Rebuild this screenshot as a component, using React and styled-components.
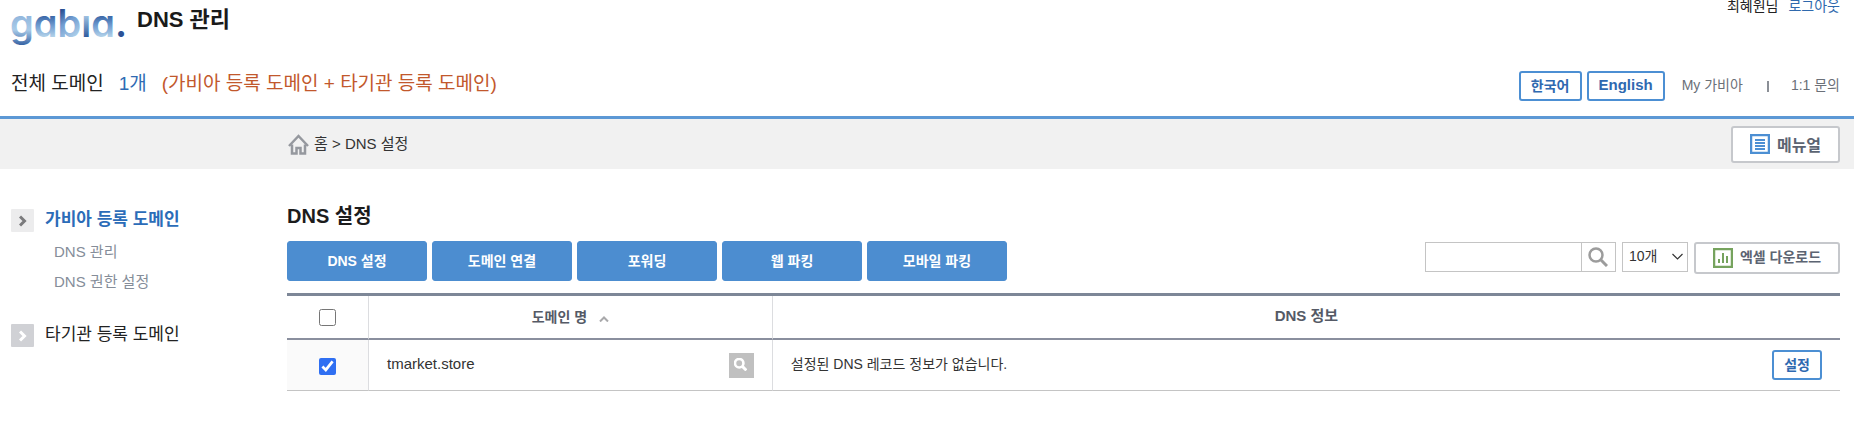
import React, { useState } from 'react';
import styled, { createGlobalStyle } from 'styled-components';

const GlobalStyle = createGlobalStyle`
* {
  box-sizing: border-box;
}
body {
  margin: 0;
  background: #fff;
  color: #222;
  font-family: "Liberation Sans", "Noto Sans CJK KR", sans-serif;
  font-size: 14px;
  line-height: 20px;
}
button, input, select {
  font-family: inherit;
  font-size: 14px;
  margin: 0;
}
button {
  cursor: pointer;
}
a {
  text-decoration: none;
}
h1, h2, ul {
  margin: 0;
  padding: 0;
}
`;

const Header = styled.header`
border-bottom: 3px solid #5c98d5;
padding: 0 14px 0 11px;
`;
const TopRow = styled.div`
display: flex;
justify-content: space-between;
align-items: flex-start;
height: 56px;
`;
const Brand = styled.div`
display: flex;
gap: 8px;
`;
const Logo = styled.svg`
display: block;
width: 118px;
height: 50px;

text {
  font-family: "Inter", "Liberation Sans", sans-serif;
  font-weight: 600;
  font-size: 38px;
  font-feature-settings: "cv11";
}
`;
const Title = styled.h1`
font-size: 22px;
line-height: 40px;
font-weight: bold;
color: #1a1a1a;
`;
const User = styled.div`
display: flex;
gap: 10px;
line-height: 12px;
`;
const LogoutLink = styled.a`
color: #2f69ad;
`;
const InfoRow = styled.div`
display: flex;
justify-content: space-between;
align-items: center;
height: 60px;
`;
const Total = styled.div`
display: flex;
gap: 15px;
font-size: 19px;
line-height: 24px;
padding-bottom: 4px;
color: #222;
`;
const Count = styled.span`
color: #2f6bb3;
`;
const Detail = styled.span`
color: #c2582c;
`;
const Utility = styled.div`
display: flex;
align-items: center;
`;
const OutlineButton = styled.button`
height: 30px;
padding: 0 ${(props) => props.$pad}px 3px;
margin-right: ${(props) => props.$gap || 0}px;
border: 2px solid #4c8fd3;
border-radius: 3px;
background: #fff;
color: #2f69b0;
font-weight: bold;
font-size: ${(props) => props.$size || 14}px;
`;
const UtilLink = styled.a`
padding-bottom: 2px;
color: #6b7078;
`;
const Bar = styled.span`
width: 2px;
height: 11px;
margin: 0 22px 0 24px;
background: #8b8f96;
`;

const CrumbBar = styled.nav`
display: flex;
justify-content: space-between;
align-items: center;
height: 50px;
padding: 0 14px 0 288px;
background: #f1f1f1;
`;
const Crumb = styled.div`
display: flex;
align-items: center;
gap: 5px;
font-size: 15px;
color: #333;

svg {
  display: block;
}
`;
const GrayButton = styled.button`
display: flex;
align-items: center;
justify-content: center;
gap: 7px;
width: ${(props) => props.$width}px;
height: ${(props) => props.$height}px;
padding: 0;
border: 2px solid #c6c8cc;
border-radius: 3px;
background: #fff;
color: #5c6472;
font-weight: bold;
font-size: ${(props) => props.$size}px;

svg {
  display: block;
}
`;
const ButtonText = styled.span`
padding-bottom: 4px;
`;

const Page = styled.div`
display: flex;
`;
const Side = styled.aside`
flex: 0 0 287px;
padding: 40px 11px 0;
`;
const Group = styled.div`
margin-bottom: 27px;
`;
const GroupTitle = styled.a`
display: flex;
align-items: center;
gap: 11px;
height: 23px;
font-size: 17px;
font-weight: ${(props) => (props.$active ? 'bold' : 'normal')};
color: ${(props) => (props.$active ? '#2b6cb8' : '#222')};

span:last-child {
  padding-bottom: 2px;
}
`;
const Arrow = styled.span`
display: flex;
align-items: center;
justify-content: center;
width: 23px;
height: 23px;
border-radius: 1px;
background: ${(props) => (props.$active ? '#ececed' : '#d0d1d5')};
color: ${(props) => (props.$active ? '#7b7b7d' : '#fff')};
`;
const SubMenu = styled.ul`
list-style: none;
padding: 5px 0 0 43px;
`;
const SubItem = styled.li`
line-height: 30px;

a {
  font-size: 15px;
  color: #858d99;
}
`;

const Main = styled.main`
flex: 1;
min-width: 0;
padding: 34px 14px 30px 0;
`;
const Heading = styled.h2`
font-size: 20px;
line-height: 26px;
font-weight: bold;
color: #1c1c1c;
`;
const Toolbar = styled.div`
display: flex;
justify-content: space-between;
margin: 12px 0;
`;
const Tabs = styled.div`
display: flex;
gap: 5px;
`;
const Tab = styled.button`
width: 140px;
height: 40px;
padding: 0 0 3px;
border: 1px solid #4c8dd0;
border-radius: 3px;
background: #4c8dd0;
color: #fff;
font-weight: bold;
`;
const Tools = styled.div`
display: flex;
align-items: flex-start;
gap: 6px;
padding-top: 1px;
`;
const SearchBox = styled.form`
display: flex;
border: 1px solid #c4c4c4;
`;
const SearchInput = styled.input`
width: 155px;
height: 28px;
padding: 0 8px;
border: none;
outline: none;
background: #fff;
`;
const SearchButton = styled.button`
display: flex;
align-items: center;
justify-content: center;
width: 34px;
height: 28px;
padding: 0 2px 0 0;
border: none;
border-left: 1px solid #c4c4c4;
background: #fff;
`;
const SelectWrap = styled.div`
position: relative;

svg {
  position: absolute;
  right: 5px;
  top: 11px;
  pointer-events: none;
}
`;
const Select = styled.select`
appearance: none;
width: 66px;
height: 30px;
padding: 0 6px 2px;
border: 1px solid #c4c4c4;
border-radius: 0;
background: #fff;
color: #333;
`;

const Table = styled.table`
width: 100%;
table-layout: fixed;
border-collapse: separate;
border-spacing: 0;
border-top: 3px solid #7d8797;
`;
const Th = styled.th`
width: ${(props) => props.$width || 'auto'};
height: 44px;
padding: 0 0 2px;
border-bottom: 2px solid #8a8f9e;
border-right: ${(props) => (props.$last ? 'none' : '1px solid #dcdde0')};
color: #555a66;
font-weight: bold;
font-size: ${(props) => props.$size || 14}px;
`;
const Td = styled.td`
height: 51px;
padding: 0 18px;
border-bottom: 1px solid #c4c4c4;
border-right: ${(props) => (props.$last ? 'none' : '1px solid #dcdde0')};
`;
const CheckTd = styled(Td)`
padding: 0;
text-align: center;
background: #fafafa;
`;
const Checkbox = styled.input`
width: 17px;
height: 17px;
vertical-align: middle;
accent-color: #2f6ff2;
`;
const SortButton = styled.button`
padding: 0;
border: none;
background: none;
color: inherit;
font-weight: bold;

svg {
  margin-left: 12px;
}
`;
const Cell = styled.div`
display: flex;
justify-content: space-between;
align-items: center;
color: #333;
`;
const CellText = styled.span`
padding-bottom: 3px;
font-size: ${(props) => props.$size || 14}px;
`;
const MiniSearch = styled.button`
display: flex;
align-items: center;
justify-content: center;
width: 25px;
height: 25px;
padding: 0 2px 2px 0;
border: none;
background: #c0c0c0;
`;

const letters = [
  { char: 'g', fill: 'url(#lg)' },
  { char: 'a', fill: 'url(#la)' },
  { char: 'b', fill: 'url(#lb)' },
  { char: 'ı', fill: 'url(#li)' },
  { char: 'a', fill: 'url(#la)' },
  { char: '.', fill: '#2b5296' },
];

const GabiaLogo = () => (
  <Logo viewBox="0 0 118 50" role="img" aria-label="gabia">
    <defs>
      <linearGradient id="lg" gradientUnits="userSpaceOnUse" x1="0" y1="14" x2="0" y2="46">
        <stop offset="0" stopColor="#8fb4dc" />
        <stop offset="0.5" stopColor="#a9cbe8" />
        <stop offset="1" stopColor="#2f5c9f" />
      </linearGradient>
      <linearGradient id="la" gradientUnits="userSpaceOnUse" x1="0" y1="14" x2="0" y2="37">
        <stop offset="0" stopColor="#2f5c9f" />
        <stop offset="0.5" stopColor="#6f9bd0" />
        <stop offset="1" stopColor="#b4d3ea" />
      </linearGradient>
      <linearGradient id="lb" gradientUnits="userSpaceOnUse" x1="48" y1="8" x2="66" y2="34">
        <stop offset="0.1" stopColor="#284f93" />
        <stop offset="0.5" stopColor="#6f9bd0" />
        <stop offset="1" stopColor="#a9cbe8" />
      </linearGradient>
      <linearGradient id="li" gradientUnits="userSpaceOnUse" x1="0" y1="14" x2="0" y2="37">
        <stop offset="0" stopColor="#a9cbe8" />
        <stop offset="1" stopColor="#2f5c9f" />
      </linearGradient>
    </defs>
    <text x="-1" y="37">
      {letters.map((l, i) => (
        <tspan key={i} fill={l.fill}>{l.char}</tspan>
      ))}
    </text>
  </Logo>
);

const HomeIcon = () => (
  <svg width="21" height="21" viewBox="0 0 21 21" fill="none" stroke="#95989e" strokeWidth="2.5">
    <path d="M1 12 10.500 2 20 12" />
    <path d="M4 10.500V19.500H8.500V14H12.500V19.500H17V10.500" />
  </svg>
);

const ManualIcon = () => (
  <svg width="20" height="20" viewBox="0 0 20 20" fill="none" stroke="#4c8fd3" strokeWidth="2">
    <rect x="1" y="1" width="18" height="18" strokeWidth="2.5" />
    <path d="M5 6h10M5 9h10M5 12h10M5 15h10" />
  </svg>
);

const ExcelIcon = () => (
  <svg width="20" height="20" viewBox="0 0 20 20" fill="none" stroke="#76a35e" strokeWidth="2">
    <rect x="1" y="1" width="18" height="18" strokeWidth="2.5" />
    <path d="M6 15v-4M10 15V5M14 15V8" />
  </svg>
);

const SearchIcon = ({ size, color, width }) => (
  <svg width={size} height={size} viewBox="0 0 20 20" fill="none" stroke={color} strokeWidth={width}>
    <circle cx="8" cy="8" r="6.500" />
    <path d="M12.500 12.500 19 19" strokeWidth={width + 0.5} />
  </svg>
);

const ChevronRight = () => (
  <svg width="8" height="12" viewBox="0 0 8 12" fill="none" stroke="currentColor" strokeWidth="3">
    <path d="M1 1.500 5.500 6 1 10.500" />
  </svg>
);

const tabs = ['DNS 설정', '도메인 연결', '포워딩', '웹 파킹', '모바일 파킹'];

const App = () => {
  const [checked, setChecked] = useState(true);
  const [all, setAll] = useState(false);
  const [keyword, setKeyword] = useState('');

  return (
    <>
      <GlobalStyle />
      <Header>
        <TopRow>
          <Brand>
            <GabiaLogo />
            <Title>DNS 관리</Title>
          </Brand>
          <User>
            <span>최혜원님</span>
            <LogoutLink href="#logout">로그아웃</LogoutLink>
          </User>
        </TopRow>
        <InfoRow>
          <Total>
            <span>전체 도메인</span>
            <Count>1개</Count>
            <Detail>(가비아 등록 도메인 + 타기관 등록 도메인)</Detail>
          </Total>
          <Utility>
            <OutlineButton $pad={10} $gap={5}>한국어</OutlineButton>
            <OutlineButton $pad={10} $gap={17} $size={15}>English</OutlineButton>
            <UtilLink href="#my">My 가비아</UtilLink>
            <Bar />
            <UtilLink href="#qna">1:1 문의</UtilLink>
          </Utility>
        </InfoRow>
      </Header>
      <CrumbBar>
        <Crumb>
          <HomeIcon />
          <span>홈 &gt; DNS 설정</span>
        </Crumb>
        <GrayButton $width={109} $height={37} $size={16}>
          <ManualIcon />
          메뉴얼
        </GrayButton>
      </CrumbBar>
      <Page>
        <Side>
          <Group>
            <GroupTitle $active href="#gabia">
              <Arrow $active><ChevronRight /></Arrow>
              <span>가비아 등록 도메인</span>
            </GroupTitle>
            <SubMenu>
              <SubItem><a href="#dns">DNS 관리</a></SubItem>
              <SubItem><a href="#auth">DNS 권한 설정</a></SubItem>
            </SubMenu>
          </Group>
          <GroupTitle href="#other">
            <Arrow><ChevronRight /></Arrow>
            <span>타기관 등록 도메인</span>
          </GroupTitle>
        </Side>
        <Main>
          <Heading>DNS 설정</Heading>
          <Toolbar>
            <Tabs>
              {tabs.map((tab) => (
                <Tab key={tab}>{tab}</Tab>
              ))}
            </Tabs>
            <Tools>
              <SearchBox onSubmit={(e) => e.preventDefault()}>
                <SearchInput
                  aria-label="검색어"
                  value={keyword}
                  onChange={(e) => setKeyword(e.target.value)}
                />
                <SearchButton aria-label="검색">
                  <SearchIcon size={20} color="#9c9c9c" width={2.5} />
                </SearchButton>
              </SearchBox>
              <SelectWrap>
                <Select aria-label="목록 개수" defaultValue="10">
                  <option value="10">10개</option>
                  <option value="20">20개</option>
                  <option value="50">50개</option>
                </Select>
                <svg width="11" height="8" viewBox="0 0 11 8" fill="none" stroke="#333" strokeWidth="1.2">
                  <path d="M.5 1 5.500 6 10.500 1" />
                </svg>
              </SelectWrap>
              <GrayButton $width={146} $height={32} $size={14}>
                <ExcelIcon />
                <ButtonText>엑셀 다운로드</ButtonText>
              </GrayButton>
            </Tools>
          </Toolbar>
          <Table>
            <thead>
              <tr>
                <Th $width="82px">
                  <Checkbox
                    type="checkbox"
                    aria-label="전체 선택"
                    checked={all}
                    onChange={(e) => setAll(e.target.checked)}
                  />
                </Th>
                <Th $width="26%">
                  <SortButton>
                    도메인 명
                    <svg width="10" height="6" viewBox="0 0 10 6" fill="none" stroke="#a9a9ab" strokeWidth="2">
                      <path d="M1 5.500 5 1.500 9 5.500" />
                    </svg>
                  </SortButton>
                </Th>
                <Th $last $size={15}>DNS 정보</Th>
              </tr>
            </thead>
            <tbody>
              <tr>
                <CheckTd>
                  <Checkbox
                    type="checkbox"
                    aria-label="tmarket.store 선택"
                    checked={checked}
                    onChange={(e) => setChecked(e.target.checked)}
                  />
                </CheckTd>
                <Td>
                  <Cell>
                    <CellText $size={15}>tmarket.store</CellText>
                    <MiniSearch aria-label="도메인 조회">
                      <SearchIcon size={13} color="#fff" width={4} />
                    </MiniSearch>
                  </Cell>
                </Td>
                <Td $last>
                  <Cell>
                    <CellText>설정된 DNS 레코드 정보가 없습니다.</CellText>
                    <OutlineButton $pad={10}>설정</OutlineButton>
                  </Cell>
                </Td>
              </tr>
            </tbody>
          </Table>
        </Main>
      </Page>
    </>
  );
};
export default App;
